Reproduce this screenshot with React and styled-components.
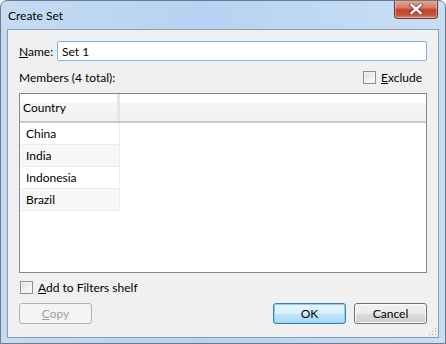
import React from "react";
import styled, { createGlobalStyle } from "styled-components";

const Global = createGlobalStyle`
  html, body {
    margin: 0;
    padding: 0;
    background: #ffffff;
  }
  body {
    font-family: Lato, "Noto Sans", sans-serif;
    font-size: 12px;
    color: #000;
  }
`;

const members = ["China", "India", "Indonesia", "Brazil"];

function CloseIcon() {
  return (
    <svg width="16" height="12" viewBox="0 0 16 12">
      <path
        d="M3.5 2 L12.5 10 M12.5 2 L3.5 10"
        stroke="#6a2b22"
        strokeWidth="4.4"
        strokeLinecap="square"
        fill="none"
        opacity="0.6"
      />
      <path
        d="M3.5 2 L12.5 10 M12.5 2 L3.5 10"
        stroke="#ffffff"
        strokeWidth="2.4"
        strokeLinecap="square"
        fill="none"
      />
    </svg>
  );
}

function Grip() {
  return (
    <svg width="10" height="10" viewBox="0 0 10 10">
      {[
        [8, 2],
        [5, 5],
        [8, 5],
        [2, 8],
        [5, 8],
        [8, 8],
      ].map(([x, y]) => (
        <rect key={`${x}-${y}`} x={x} y={y} width="1" height="1" fill="#a7adb5" />
      ))}
    </svg>
  );
}

function App() {
  return (
    <>
      <Global />
      <Window>
        <TitleBar>
          <Title>Create Set</Title>
          <CloseButton>
            <CloseIcon />
          </CloseButton>
        </TitleBar>

        <Client>
          <NameRow>
            <Label>
              <u>N</u>ame:
            </Label>
            <TextInput defaultValue="Set 1" />
          </NameRow>

          <MembersRow>
            <span>Members (4 total):</span>
            <CheckLabel>
              <Box />
              <span>
                <u>E</u>xclude
              </span>
            </CheckLabel>
          </MembersRow>

          <Table>
            <HeaderRow>
              <HeaderCell>Country</HeaderCell>
              <HeaderRest />
            </HeaderRow>
            {members.map((m, i) => (
              <Row key={m} $alt={i % 2 === 1}>
                {m}
              </Row>
            ))}
          </Table>

          <FilterRow>
            <CheckLabel>
              <Box />
              <span>
                <u>A</u>dd to Filters shelf
              </span>
            </CheckLabel>
          </FilterRow>

          <ButtonRow>
            <Button disabled>
              <u>C</u>opy
            </Button>
            <Spacer />
            <Button $default>OK</Button>
            <Button>Cancel</Button>
          </ButtonRow>

          <GripSpot>
            <Grip />
          </GripSpot>
        </Client>
      </Window>
    </>
  );
}

export default App;

const Window = styled.div`
  width: 446px;
  height: 344px;
  box-sizing: border-box;
  border: 1px solid #6b7a8c;
  border-radius: 7px 7px 0 0;
  background: linear-gradient(90deg, #c5dbf2 0%, #b6d3f3 45%, #c9def4 100%);
  display: flex;
  flex-direction: column;
  overflow: hidden;
`;

const TitleBar = styled.div`
  height: 28px;
  display: flex;
  justify-content: space-between;
  align-items: flex-start;
  flex-shrink: 0;
`;

const Title = styled.div`
  padding: 7px 0 0 7px;
  font-size: 12px;
  color: #000;
`;

const CloseButton = styled.div`
  width: 44px;
  height: 19px;
  margin: -1px 7px 0 0;
  box-sizing: border-box;
  border: 1px solid #6d3a35;
  border-top: none;
  border-radius: 0 0 4px 4px;
  background: linear-gradient(180deg, #e7aa9b 0%, #d8826f 40%, #c3402a 55%, #c85640 85%, #dd8a77 100%);
  box-shadow: inset 0 0 0 1px rgba(255, 255, 255, 0.35);
  display: flex;
  align-items: center;
  justify-content: center;
`;

const Client = styled.div`
  position: relative;
  margin: 0 6px 5px 6px;
  flex: 1;
  box-sizing: border-box;
  border: 1px solid #8d9cad;
  background: #f0f0f0;
  padding: 11px 11px 13px 11px;
  display: flex;
  flex-direction: column;
`;

const NameRow = styled.div`
  display: flex;
  align-items: center;
  height: 20px;
`;

const Label = styled.label`
  width: 38px;
  flex-shrink: 0;
`;

const TextInput = styled.input`
  flex: 1;
  min-width: 0;
  height: 20px;
  box-sizing: border-box;
  border: 1px solid #7eb4ea;
  border-radius: 2px;
  padding: 0 4px;
  font-family: inherit;
  font-size: 12px;
  background: #fff;
  outline: none;
`;

const MembersRow = styled.div`
  margin-top: 7px;
  height: 18px;
  display: flex;
  align-items: center;
  justify-content: space-between;
  padding-right: 5px;
`;

const CheckLabel = styled.label`
  display: flex;
  align-items: center;
  gap: 5px;
`;

const Box = styled.span`
  width: 13px;
  height: 13px;
  box-sizing: border-box;
  border: 1px solid #8e8f8f;
  background: linear-gradient(135deg, #dcdcdc 0%, #f3f3f3 60%, #fbfbfb 100%);
  box-shadow: inset 0 0 0 1px #f4f4f4;
`;

const Table = styled.div`
  margin-top: 7px;
  height: 180px;
  box-sizing: border-box;
  border: 1px solid #828790;
  background: #fff;
`;

const HeaderRow = styled.div`
  height: 29px;
  display: flex;
  border-bottom: 2px solid #c9c9c9;
  box-sizing: border-box;
  background: linear-gradient(180deg, #ffffff 0%, #ffffff 30%, #f5f6f7 32%, #eff0f2 100%);
`;

const HeaderCell = styled.div`
  width: 100px;
  box-sizing: border-box;
  border-right: 3px solid #e6e6e6;
  padding: 0 0 0 3px;
  display: flex;
  align-items: center;
`;

const HeaderRest = styled.div`
  flex: 1;
`;

const Row = styled.div`
  width: 100px;
  height: 22px;
  box-sizing: border-box;
  padding-left: 6px;
  display: flex;
  align-items: center;
  background: ${(p) => (p.$alt ? "#f7f7f7" : "#ffffff")};
  border-bottom: 1px solid #ececec;
  border-right: 1px solid #ececec;
`;

const FilterRow = styled.div`
  margin-top: 7px;
  height: 14px;
  display: flex;
  align-items: center;
  padding-left: 1px;
`;

const ButtonRow = styled.div`
  margin-top: 9px;
  display: flex;
  gap: 8px;
`;

const Spacer = styled.div`
  flex: 1;
`;

const Button = styled.button`
  width: 73px;
  height: 21px;
  flex-shrink: 0;
  margin: 0;
  box-sizing: border-box;
  font-family: inherit;
  font-size: 12px;
  color: #000;
  border-radius: 3px;
  border: 1px solid ${(p) => (p.$default ? "#3c7fb1" : "#707070")};
  background: ${(p) =>
    p.$default
      ? "linear-gradient(180deg, #eaf6fd 0%, #d9f0fc 50%, #bee6fd 51%, #a7d9f5 100%)"
      : "linear-gradient(180deg, #f2f2f2 0%, #ebebeb 50%, #dddddd 51%, #cfcfcf 100%)"};
  box-shadow: ${(p) =>
    p.$default ? "inset 0 0 0 1px #8fd0f2" : "inset 0 0 0 1px #fcfcfc"};
  padding: 0;

  &:disabled {
    color: #a0a0a0;
    border-color: #adb2b5;
    background: #f4f4f4;
    box-shadow: none;
  }
`;

const GripSpot = styled.div`
  position: absolute;
  right: 1px;
  bottom: 1px;
  line-height: 0;
`;
